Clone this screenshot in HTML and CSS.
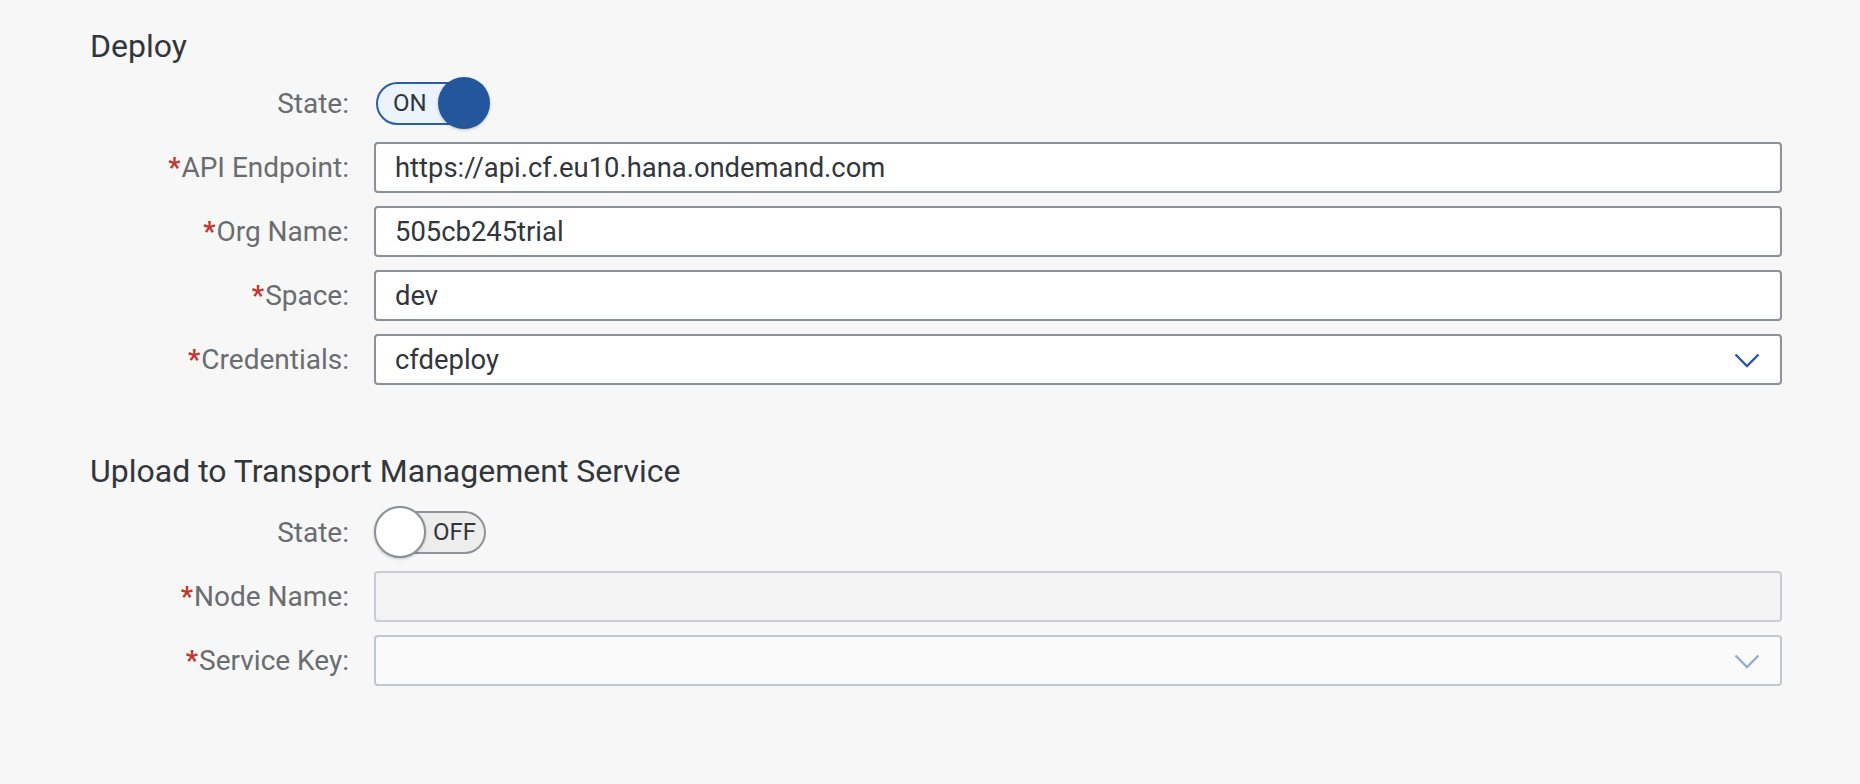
FILE: index.html
```html
<!DOCTYPE html>
<html>
<head>
<meta charset="utf-8">
<link rel="stylesheet" href="styles.css">
</head>
<body>
<div class="page">
  <section class="section first">
    <h2 class="title">Deploy</h2>
    <div class="form">
      <div class="label">State:</div>
      <div class="field">
        <div class="switch on">
          <div class="track"><span class="switch-text">ON</span></div>
          <div class="knob"></div>
        </div>
      </div>

      <div class="label"><span class="req">*</span>API Endpoint:</div>
      <div class="field"><div class="input">https://api.cf.eu10.hana.ondemand.com</div></div>

      <div class="label"><span class="req">*</span>Org Name:</div>
      <div class="field"><div class="input">505cb245trial</div></div>

      <div class="label"><span class="req">*</span>Space:</div>
      <div class="field"><div class="input">dev</div></div>

      <div class="label"><span class="req">*</span>Credentials:</div>
      <div class="field">
        <div class="input select">
          <span>cfdeploy</span>
          <svg class="chevron" width="26" height="15" viewBox="0 0 26 15"><polyline points="1.5,1.5 13,13 24.5,1.5" fill="none" stroke="currentColor" stroke-width="2.4" stroke-linejoin="miter"/></svg>
        </div>
      </div>
    </div>
  </section>

  <section class="section second">
    <h2 class="title">Upload to Transport Management Service</h2>
    <div class="form">
      <div class="label">State:</div>
      <div class="field">
        <div class="switch off">
          <div class="knob"></div>
          <div class="track"><span class="switch-text">OFF</span></div>
        </div>
      </div>

      <div class="label"><span class="req">*</span>Node Name:</div>
      <div class="field"><div class="input disabled"></div></div>

      <div class="label"><span class="req">*</span>Service Key:</div>
      <div class="field">
        <div class="input select disabled-select">
          <span></span>
          <svg class="chevron" width="26" height="15" viewBox="0 0 26 15"><polyline points="1.5,1.5 13,13 24.5,1.5" fill="none" stroke="currentColor" stroke-width="2.4" stroke-linejoin="miter"/></svg>
        </div>
      </div>
    </div>
  </section>
</div>
</body>
</html>
```
FILE: styles.css
```css
html, body {
  margin: 0;
  padding: 0;
  background: #f7f7f7;
}

body {
  font-family: Roboto, "Liberation Sans", sans-serif;
  color: #32363a;
  width: 1860px;
  height: 784px;
  overflow: hidden;
}

.page {
  padding: 26px 0 0 90px;
}

.title {
  margin: 0;
  font-size: 32px;
  line-height: 40px;
  font-weight: 400;
  color: #32363a;
}

.first .title {
  margin-bottom: 11px;
}

.second {
  margin-top: 66px;
}

.second .title {
  margin-bottom: 15px;
}

.form {
  display: grid;
  grid-template-columns: 260px 1408px;
  column-gap: 24px;
  row-gap: 13px;
  align-items: center;
}

.label {
  text-align: right;
  font-size: 28px;
  color: #6a6d70;
  white-space: nowrap;
  padding-right: 1px;
}

.req {
  color: #c4352b;
  font-weight: 700;
  font-size: 27px;
  margin-right: 1px;
}

.field {
  display: flex;
  align-items: center;
}

.input {
  box-sizing: border-box;
  width: 1408px;
  height: 51px;
  border: 2px solid #89919a;
  border-radius: 4px;
  background: #ffffff;
  padding: 0 19px;
  font-size: 27.4px;
  color: #32363a;
  display: flex;
  align-items: center;
}

.select {
  justify-content: space-between;
  padding-right: 20px;
}

.chevron {
  color: #2758a0;
  margin-top: 2px;
}

.disabled {
  background: #f3f3f3;
  border-color: #c9cdd2;
}

.disabled-select {
  background: #fafafa;
  border-color: #c2c7cd;
}

.disabled-select .chevron {
  color: #93add3;
}

/* switches */
.switch {
  display: flex;
  align-items: center;
  height: 52px;
}

.switch.on {
  margin-left: 2px;
}

.track {
  box-sizing: border-box;
  width: 110px;
  height: 43px;
  border-radius: 22px;
  border: 2px solid;
  display: flex;
  align-items: center;
}

.switch-text {
  font-size: 24px;
  color: #32363a;
}

.knob {
  box-sizing: border-box;
  width: 52px;
  height: 52px;
  border-radius: 50%;
  position: relative;
  z-index: 1;
  flex: none;
}

.on .track {
  background: #ebf4fd;
  border-color: #2b5ea3;
  padding-left: 15px;
}

.on .knob {
  background: #24569c;
  margin-left: -48px;
  box-shadow: 0 1px 3px rgba(0, 0, 0, 0.25);
}

.off .knob {
  background: #ffffff;
  border: 2px solid #8a9099;
  box-shadow: 0 1px 3px rgba(0, 0, 0, 0.2);
}

.off .track {
  background: #ededed;
  border-color: #8d939b;
  margin-left: -50px;
  padding-left: 55px;
}
```
